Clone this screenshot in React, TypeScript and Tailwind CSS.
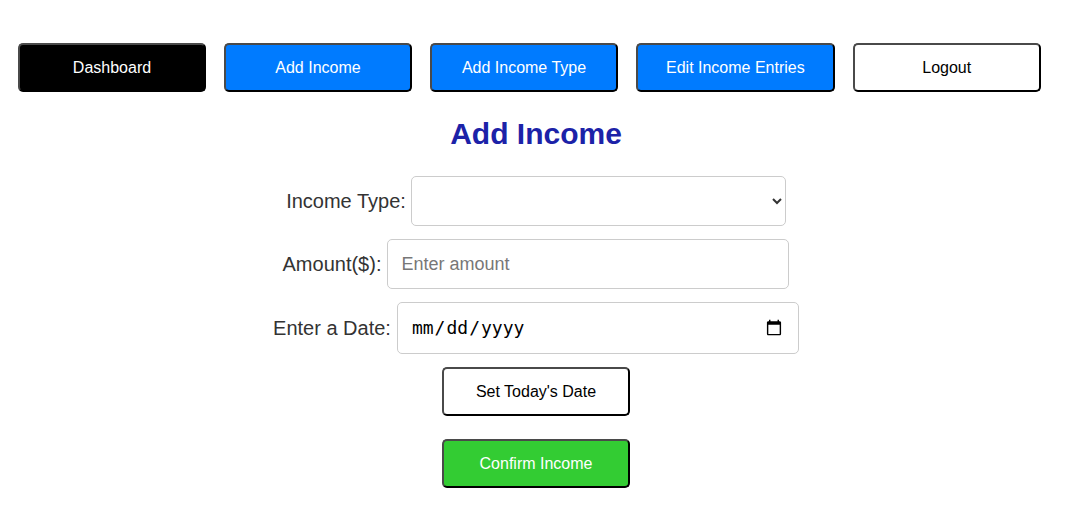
import { useState } from "react";

const navItems = [
  { label: "Dashboard", tone: "bg-black text-white" },
  { label: "Add Income", tone: "bg-[#007bff] text-white" },
  { label: "Add Income Type", tone: "bg-[#007bff] text-white" },
  { label: "Edit Income Entries", tone: "bg-[#007bff] text-white" },
  { label: "Logout", tone: "bg-white text-black" },
];

const btn =
  "h-[49px] min-w-[188px] rounded-[5px] border-2 border-[#4a4a4a] border-r-black border-b-black px-[28px] text-base";

export default function App() {
  const [date, setDate] = useState("");

  return (
    <div className="min-h-[526px] bg-white font-['Liberation_Sans',Arial,sans-serif] text-[#333]">
      <nav className="flex gap-[18px] pl-[18px] pt-[43px]">
        {navItems.map((item) => (
          <button key={item.label} className={`${btn} ${item.tone}`}>
            {item.label}
          </button>
        ))}
      </nav>

      <div className="flex flex-col items-center">
        <h1 className="mt-[23px] text-[30px] font-bold leading-[38px] text-[#1c22a8]">Add Income</h1>

        <div className="mt-[23px] flex flex-col items-center gap-[13px]">
          <label className="flex items-center text-xl">
            <span className="mr-[5px]">Income Type:</span>
            <select className="h-[50px] w-[375px] rounded-[5px] border border-[#ccc] bg-white px-[10px] text-lg" />
          </label>

          <label className="flex items-center text-xl">
            <span className="mr-[6px]">Amount($):</span>
            <input
              type="number"
              placeholder="Enter amount"
              className="h-[50px] w-[402px] rounded-[5px] border border-[#ccc] px-[13px] text-lg placeholder:text-[#777]"
            />
          </label>

          <label className="flex items-center text-xl">
            <span className="mr-[6px]">Enter a Date:</span>
            <input
              type="date"
              value={date}
              onChange={(e) => setDate(e.target.value)}
              className="h-[52px] w-[402px] rounded-[5px] border border-[#ccc] px-[13px] font-['DejaVu_Sans_Mono',monospace] text-lg text-black"
            />
          </label>
        </div>

        <button
          onClick={() => setDate(new Date().toISOString().slice(0, 10))}
          className={`${btn} mt-[13px] bg-white text-black`}
        >
          Set Today's Date
        </button>
        <button className={`${btn} mt-[23px] bg-[#33cc33] text-white`}>Confirm Income</button>
      </div>
    </div>
  );
}
